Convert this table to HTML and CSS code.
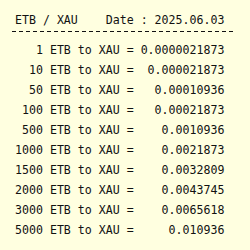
FILE: index.html
```html
<!DOCTYPE html>
<html>
<head>
<meta charset="utf-8">
<link rel="stylesheet" href="styles.css">
</head>
<body>
<div class="box">
<div class="head">ETB / XAU    Date : 2025.06.03</div>
<div class="rule"></div>
<div class="rows">
<div class="row">   1 ETB to XAU = 0.0000021873</div>
<div class="row">  10 ETB to XAU =  0.000021873</div>
<div class="row">  50 ETB to XAU =   0.00010936</div>
<div class="row"> 100 ETB to XAU =   0.00021873</div>
<div class="row"> 500 ETB to XAU =    0.0010936</div>
<div class="row">1000 ETB to XAU =    0.0021873</div>
<div class="row">1500 ETB to XAU =    0.0032809</div>
<div class="row">2000 ETB to XAU =    0.0043745</div>
<div class="row">3000 ETB to XAU =    0.0065618</div>
<div class="row">5000 ETB to XAU =     0.010936</div>
</div>
</div>
</body>
</html>
```
FILE: styles.css
```css
html, body {
  margin: 0;
  padding: 0;
  background: #ffffe0;
}
.box {
  padding: 10px 0 0 15px;
  font-family: "DejaVu Sans Mono", monospace;
  font-size: 11.6px;
  color: #111;
}
.head, .row {
  white-space: pre;
}
.head {
  line-height: 20px;
}
.rule {
  width: 221px;
  height: 1px;
  margin: 1px 0 8px -3px;
  background: repeating-linear-gradient(to right, #111 0, #111 4px, transparent 4px, transparent 7px);
}
.row {
  line-height: 20px;
}
```
